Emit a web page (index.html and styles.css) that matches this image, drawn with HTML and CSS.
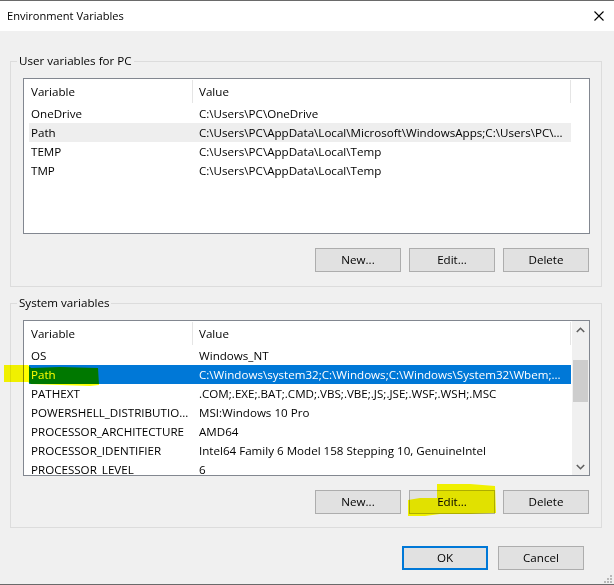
FILE: index.html
```html
<!DOCTYPE html>
<html lang="en">
<head>
<meta charset="utf-8">
<title>Environment Variables</title>
<link rel="stylesheet" href="styles.css">
</head>
<body>
<div class="window">
  <div class="titlebar">
    <span class="title">Environment Variables</span>
    <svg class="close" width="10" height="10" viewBox="0 0 10 10"><path d="M0.5 0.5 L9.5 9.5 M9.5 0.5 L0.5 9.5" stroke="#000" stroke-width="1.1" fill="none"/></svg>
  </div>

  <section class="group group-user">
    <div class="legend">User variables for PC</div>
    <div class="list">
      <div class="items">
        <div class="head"><span class="c1">Variable</span><span class="c2">Value</span></div>
        <div class="row"><span class="c1">OneDrive</span><span class="c2">C:\Users\PC\OneDrive</span></div>
        <div class="row row-inactive"><span class="c1">Path</span><span class="c2">C:\Users\PC\AppData\Local\Microsoft\WindowsApps;C:\Users\PC\...</span></div>
        <div class="row"><span class="c1">TEMP</span><span class="c2">C:\Users\PC\AppData\Local\Temp</span></div>
        <div class="row"><span class="c1">TMP</span><span class="c2">C:\Users\PC\AppData\Local\Temp</span></div>
      </div>
    </div>
    <div class="btns">
      <button class="btn">New...</button>
      <button class="btn">Edit...</button>
      <button class="btn">Delete</button>
    </div>
  </section>

  <section class="group group-system">
    <div class="legend">System variables</div>
    <div class="list">
      <div class="items">
        <div class="head"><span class="c1">Variable</span><span class="c2">Value</span></div>
        <div class="row"><span class="c1">OS</span><span class="c2">Windows_NT</span></div>
        <div class="row row-selected"><span class="c1">Path</span><span class="c2">C:\Windows\system32;C:\Windows;C:\Windows\System32\Wbem;...</span></div>
        <div class="row"><span class="c1">PATHEXT</span><span class="c2">.COM;.EXE;.BAT;.CMD;.VBS;.VBE;.JS;.JSE;.WSF;.WSH;.MSC</span></div>
        <div class="row"><span class="c1">POWERSHELL_DISTRIBUTIO...</span><span class="c2">MSI:Windows 10 Pro</span></div>
        <div class="row"><span class="c1">PROCESSOR_ARCHITECTURE</span><span class="c2">AMD64</span></div>
        <div class="row"><span class="c1">PROCESSOR_IDENTIFIER</span><span class="c2">Intel64 Family 6 Model 158 Stepping 10, GenuineIntel</span></div>
        <div class="row"><span class="c1">PROCESSOR_LEVEL</span><span class="c2">6</span></div>
      </div>
      <div class="scrollbar">
        <div class="arrow"><svg width="9" height="6" viewBox="0 0 9 6"><polyline points="0.8,5 4.5,1.3 8.2,5" fill="none" stroke="#606060" stroke-width="1.6"/></svg></div>
        <div class="track"><div class="thumb"></div></div>
        <div class="arrow"><svg width="9" height="6" viewBox="0 0 9 6"><polyline points="0.8,1 4.5,4.7 8.2,1" fill="none" stroke="#606060" stroke-width="1.6"/></svg></div>
      </div>
    </div>
    <div class="btns">
      <button class="btn">New...</button>
      <button class="btn">Edit...</button>
      <button class="btn">Delete</button>
    </div>
  </section>

  <div class="footer">
    <button class="btn btn-default">OK</button>
    <button class="btn">Cancel</button>
  </div>

  <svg class="grip" width="9" height="9" viewBox="0 0 9 9">
    <rect x="7" y="1" width="2" height="2" fill="#b8b8b8"/>
    <rect x="4" y="4" width="2" height="2" fill="#b8b8b8"/>
    <rect x="7" y="4" width="2" height="2" fill="#b8b8b8"/>
    <rect x="1" y="7" width="2" height="2" fill="#b8b8b8"/>
    <rect x="4" y="7" width="2" height="2" fill="#b8b8b8"/>
    <rect x="7" y="7" width="2" height="2" fill="#b8b8b8"/>
  </svg>

  <svg class="marker" width="614" height="585" viewBox="0 0 614 585">
    <polygon points="4,365 28,365 31,368 60,367 98,368 99,385 90,386 60,385 31,384 28,382 4,382" fill="#ffff00"/>
    <polygon points="437,484 470,484 495,486 496,513 470,514 440,514 425,516 408,516 408,500 420,498 437,498" fill="#ffff00"/>
  </svg>
</div>
</body>
</html>
```

FILE: styles.css
```css
* {
  box-sizing: border-box;
}

html, body {
  margin: 0;
  padding: 0;
  background: #f0f0f0;
}

body {
  font-family: "Open Sans", "Noto Sans", sans-serif;
  font-size: 11.6px;
  color: #000;
}

.window {
  position: relative;
  width: 614px;
  height: 585px;
  background: #f0f0f0;
  border-top: 1px solid #6a6a6a;
  border-bottom: 1px solid #6a6a6a;
  display: flex;
  flex-direction: column;
}

.titlebar {
  height: 30px;
  flex: none;
  background: #fff;
  display: flex;
  align-items: center;
  justify-content: space-between;
  padding: 0 10px 0 7px;
}

.title {
  font-size: 11.1px;
  line-height: 30px;
  padding-bottom: 1px;
}

.close {
  display: block;
  margin-top: -1px;
}

.group {
  margin: 30px 12px 0 10px;
  border: 1px solid #dcdcdc;
  padding: 0 11px 14px 12px;
}

.group-system {
  margin-top: 16px;
  padding-bottom: 13px;
}

.legend {
  width: fit-content;
  margin: -9px 0 0 -6px;
  padding: 0 2px;
  line-height: 16px;
  height: 16px;
  background: #f0f0f0;
}

.list {
  margin-top: 9px;
  height: 156px;
  border: 1px solid #828790;
  background: #fff;
  display: flex;
  overflow: hidden;
}

.items {
  flex: 1;
  padding-left: 5px;
  overflow: hidden;
}

.head,
.row {
  display: flex;
  width: 542px;
  white-space: nowrap;
}

.head {
  height: 25px;
  align-items: stretch;
}

.head .c1,
.head .c2 {
  display: flex;
  align-items: center;
  border-right: 1px solid #e5e5e5;
  margin: 1px 0 1px;
  padding-bottom: 1px;
}

.c1 {
  width: 164px;
  flex: none;
  padding-left: 2px;
  overflow: hidden;
}

.c2 {
  flex: 1;
  padding-left: 6px;
  overflow: hidden;
}

.row {
  height: 19px;
  line-height: 19px;
}

.row-inactive {
  background: #eeeeee;
}

.row-selected {
  background: #0078d7;
  color: #fff;
}

.scrollbar {
  width: 17px;
  flex: none;
  background: #f0f0f0;
  display: flex;
  flex-direction: column;
}

.arrow {
  height: 17px;
  flex: none;
  display: flex;
  align-items: center;
  justify-content: center;
}

.arrow svg {
  display: block;
}

.track {
  flex: 1;
  padding: 22px 1px 0 1px;
}

.thumb {
  height: 42px;
  background: #cdcdcd;
}

.btns {
  display: flex;
  justify-content: flex-end;
  gap: 8px;
  margin-top: 14px;
  margin-right: 1px;
}

.btn {
  width: 86px;
  height: 24px;
  padding: 0 0 1px;
  margin: 0;
  font: inherit;
  color: #000;
  background: #e1e1e1;
  border: 1px solid #adadad;
  border-radius: 0;
}

.btn-default {
  border: 2px solid #0078d7;
}

.footer {
  display: flex;
  justify-content: flex-end;
  gap: 10px;
  margin-top: 18px;
  padding-right: 30px;
}

.grip {
  position: absolute;
  right: 2px;
  bottom: 1px;
  display: block;
}

.marker {
  position: absolute;
  left: 0;
  top: -1px;
  pointer-events: none;
  mix-blend-mode: multiply;
}
```
